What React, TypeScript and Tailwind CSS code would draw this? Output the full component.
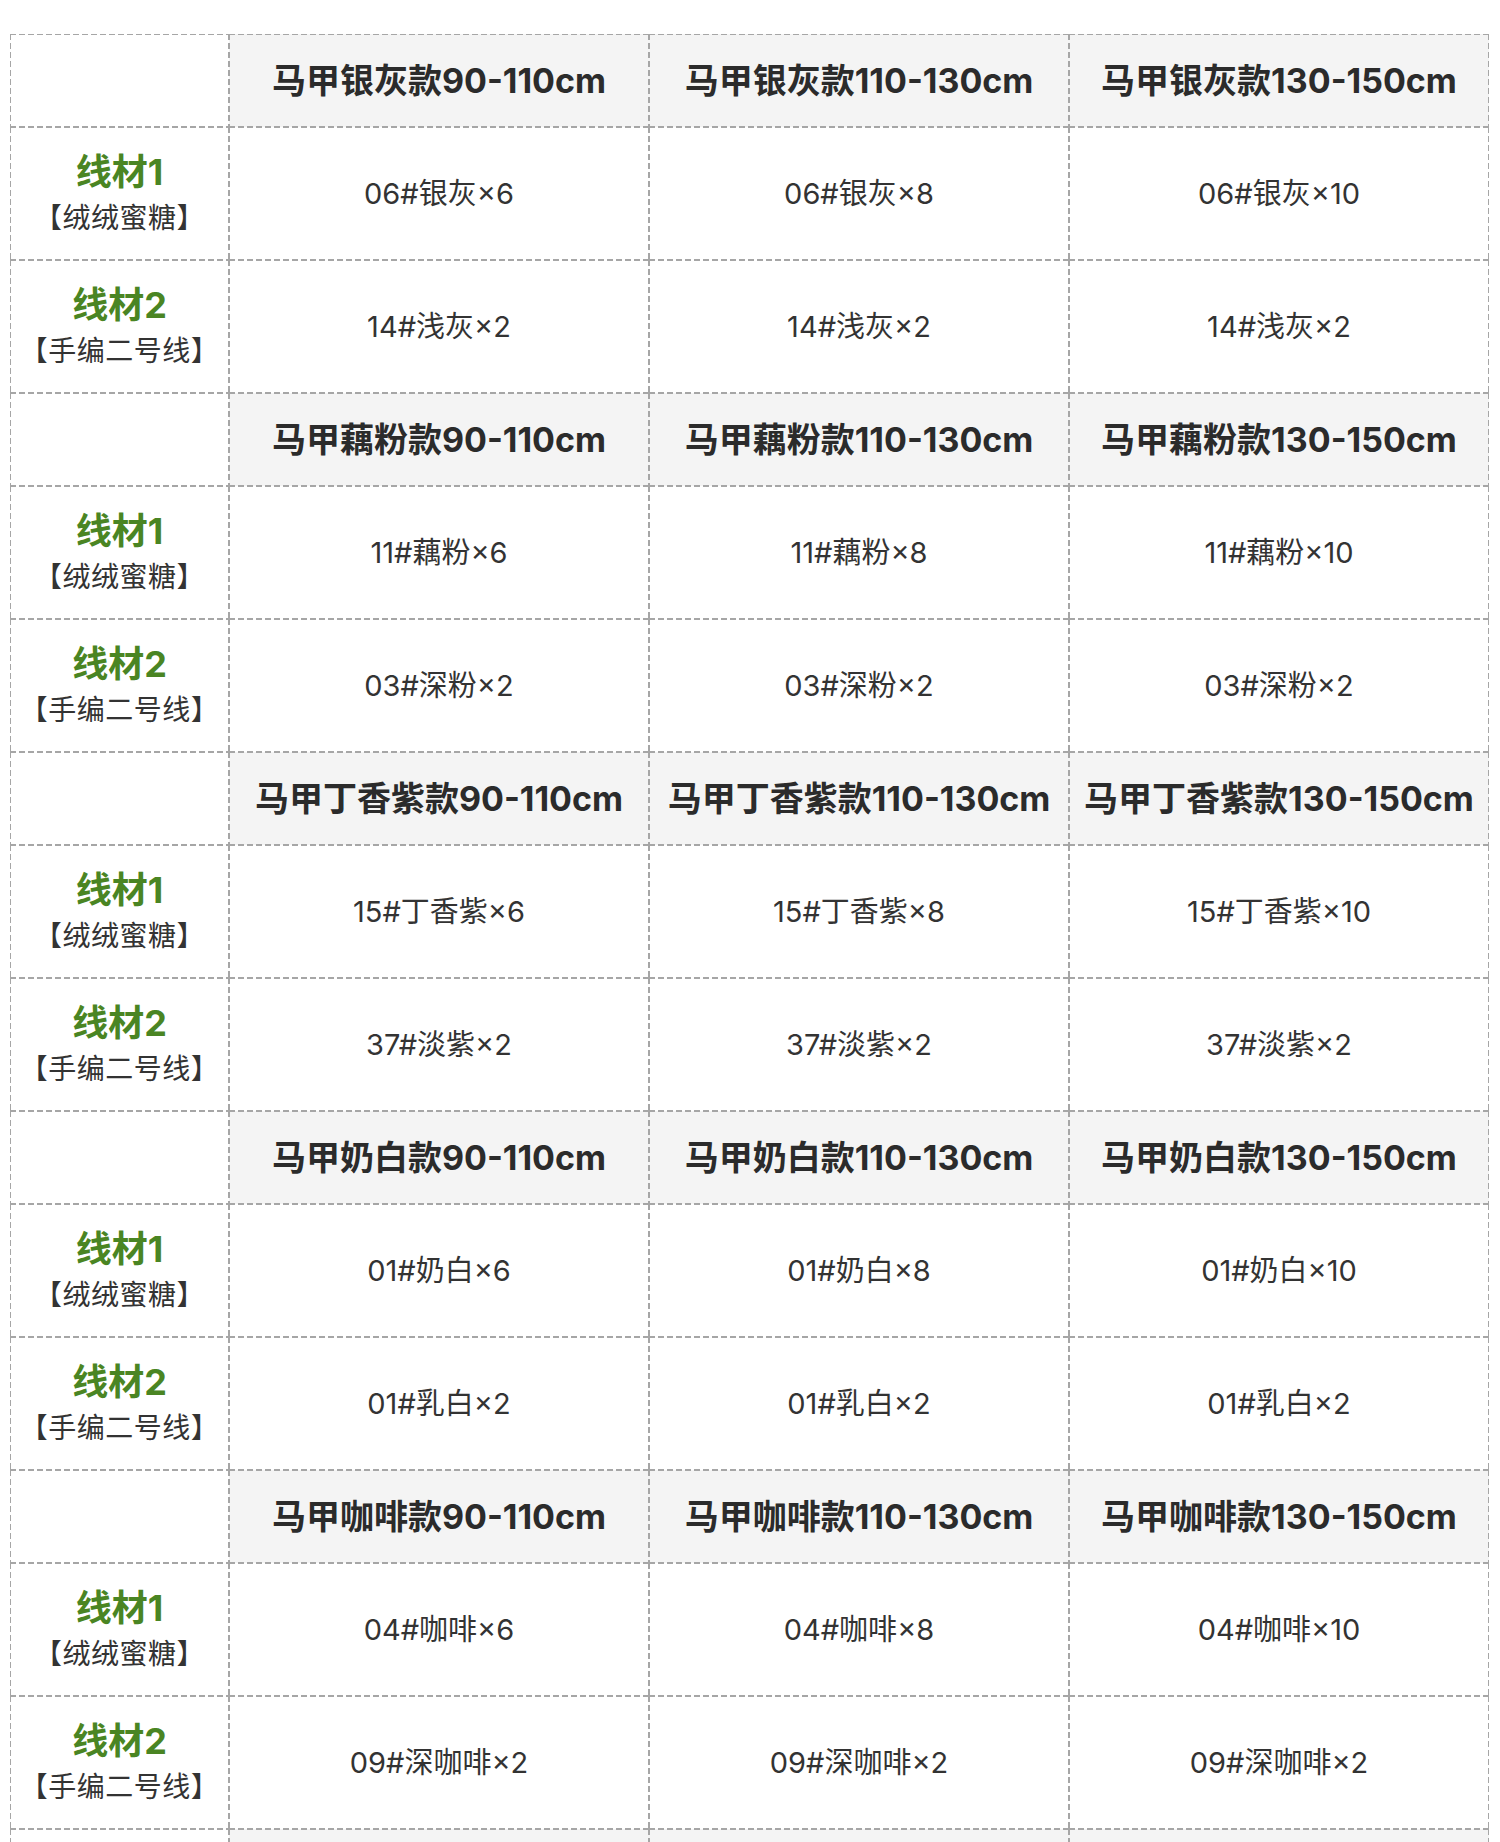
const sizes = ["90-110cm", "110-130cm", "130-150cm"];
const counts = [6, 8, 10];

const blocks = [
  { name: "银灰", yarn1: "06#银灰", yarn2: "14#浅灰×2" },
  { name: "藕粉", yarn1: "11#藕粉", yarn2: "03#深粉×2" },
  { name: "丁香紫", yarn1: "15#丁香紫", yarn2: "37#淡紫×2" },
  { name: "奶白", yarn1: "01#奶白", yarn2: "01#乳白×2" },
  { name: "咖啡", yarn1: "04#咖啡", yarn2: "09#深咖啡×2" },
];

// dashed 1px edges on all four sides, drawn with gradients so the dash is 6px on / 3px off
const cell =
  "flex items-center justify-center [background-image:linear-gradient(to_right,#a6a6a6_6px,transparent_6px),linear-gradient(to_right,#a6a6a6_6px,transparent_6px),linear-gradient(to_bottom,#a6a6a6_6px,transparent_6px),linear-gradient(to_bottom,#a6a6a6_6px,transparent_6px)] [background-size:9px_1px,9px_1px,1px_9px,1px_9px] [background-position:0_0,0_100%,0_0,100%_0] [background-repeat:repeat-x,repeat-x,repeat-y,repeat-y]";

function Label({ n, sub }: { n: number; sub: string }) {
  return (
    <div className={`${cell} h-[133px] flex-col`}>
      <div className="text-[36px] leading-[40px] font-bold text-[#4a8523]">线材{n}</div>
      <div className="text-[28px] leading-[34px] text-[#333] mt-[9px] tracking-[0.5px]">{sub}</div>
    </div>
  );
}

export default function App() {
  return (
    <div
      className="h-[1842px] overflow-hidden bg-white pt-[34px]"
      style={{ fontFamily: "Inter, 'Noto Sans CJK SC', sans-serif" }}
    >
      <div className="ml-[10px] grid grid-cols-[219px_420px_420px_420px]">
        {blocks.map((b) => (
          <div key={b.name} className="contents">
            <div className={`${cell} h-[93px]`} />
            {sizes.map((s) => (
              <div key={s} className={`${cell} h-[93px] bg-[#f4f4f4] text-[34px] font-bold text-[#2b2b2b]`}>
                马甲{b.name}款{s}
              </div>
            ))}
            <Label n={1} sub="【绒绒蜜糖】" />
            {counts.map((c) => (
              <div key={c} className={`${cell} h-[133px] text-[29px] text-[#333]`}>
                {b.yarn1}×{c}
              </div>
            ))}
            <Label n={2} sub="【手编二号线】" />
            {counts.map((c) => (
              <div key={c} className={`${cell} h-[133px] text-[29px] text-[#333]`}>
                {b.yarn2}
              </div>
            ))}
          </div>
        ))}
        <div className={`${cell} h-[93px]`} />
        <div className={`${cell} h-[93px] bg-[#f4f4f4]`} />
        <div className={`${cell} h-[93px] bg-[#f4f4f4]`} />
        <div className={`${cell} h-[93px] bg-[#f4f4f4]`} />
      </div>
    </div>
  );
}
